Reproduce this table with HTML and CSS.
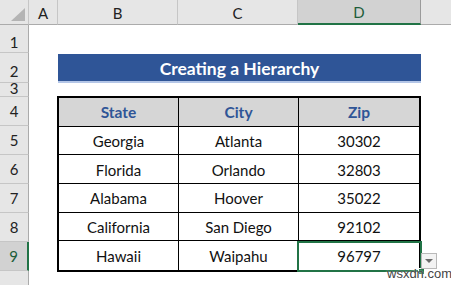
FILE: index.html
```html
<!DOCTYPE html>
<html>
<head>
<meta charset="utf-8">
<link rel="stylesheet" href="styles.css">
</head>
<body>
<div class="sheet">
  <div class="corner"><svg width="16" height="14" viewBox="0 0 16 14"><polygon points="15,0 15,13 1,13" fill="#b4b4b4"/></svg></div>
  <div class="ch">A</div>
  <div class="ch">B</div>
  <div class="ch">C</div>
  <div class="ch sel">D</div>
  <div class="ch last"></div>

  <div class="rh r1">1</div>
  <div class="rh r2">2</div>
  <div class="rh r3"><span>3</span></div>
  <div class="rh r4">4</div>
  <div class="rh r5">5</div>
  <div class="rh r6">6</div>
  <div class="rh r7">7</div>
  <div class="rh r8">8</div>
  <div class="rh r9 sel">9</div>
  <div class="rh r10"></div>

  <div class="title">Creating a Hierarchy</div>

  <div class="tbl">
    <div class="c hd">State</div><div class="c hd">City</div><div class="c hd end">Zip</div>
    <div class="c">Georgia</div><div class="c">Atlanta</div><div class="c end">30302</div>
    <div class="c">Florida</div><div class="c">Orlando</div><div class="c end">32803</div>
    <div class="c">Alabama</div><div class="c">Hoover</div><div class="c end">35022</div>
    <div class="c">California</div><div class="c">San Diego</div><div class="c end">92102</div>
    <div class="c bot">Hawaii</div><div class="c bot">Waipahu</div><div class="c bot end">96797</div>
  </div>

  <div class="selbox"></div>
  <div class="handle"></div>
  <div class="dd"><svg width="8" height="5" viewBox="0 0 8 5"><polygon points="0,0 8,0 4,4" fill="#6b6b6b"/></svg></div>
  <div class="wm">wsxdn.com</div>
</div>
</body>
</html>
```
FILE: styles.css
```css
html, body {
  margin: 0;
  padding: 0;
  background: #ffffff;
}
.sheet {
  position: relative;
  width: 451px;
  height: 285px;
  overflow: hidden;
  display: grid;
  grid-template-columns: 29px 29px 120px 120px 123px 1fr;
  grid-template-rows: 25px 28px 30px 14px 29px 29px 29px 29px 29px 29px 1fr;
  font-family: Lato, "Open Sans", sans-serif;
  color: #000;
}
.corner {
  grid-column: 1;
  grid-row: 1;
  background: #e6e6e6;
  border-right: 1px solid #c6c6c6;
  border-bottom: 1px solid #ababab;
  box-sizing: border-box;
  display: flex;
  align-items: flex-end;
  justify-content: flex-end;
  padding: 0 2px 2px 0;
}
.ch {
  grid-row: 1;
  background: #e6e6e6;
  border-right: 1px solid #c6c6c6;
  border-bottom: 1px solid #ababab;
  box-sizing: border-box;
  display: flex;
  align-items: center;
  justify-content: center;
  font-size: 15px;
  color: #222;
  padding-top: 1px;
}
.ch.sel {
  background: #d2d2d2;
  border-bottom: 2px solid #217346;
  color: #1e5d3a;
  border-right: 1px solid #9b9b9b;
}
.ch.last { border-right: none; }
.rh {
  grid-column: 1;
  background: #e6e6e6;
  border-right: 1px solid #ababab;
  border-bottom: 1px solid #c6c6c6;
  box-sizing: border-box;
  display: flex;
  align-items: center;
  justify-content: center;
  font-size: 15px;
  color: #222;
  overflow: hidden;
}
.r1 { grid-row: 2; padding-top: 6px; }
.r2 { grid-row: 3; padding-top: 6px; }
.r3 { grid-row: 4; align-items: flex-start; }
.r3 span { display: block; line-height: 12px; margin-top: -1px; }
.r4 { grid-row: 5; }
.r5 { grid-row: 6; }
.r6 { grid-row: 7; }
.r7 { grid-row: 8; }
.r8 { grid-row: 9; }
.r9 { grid-row: 10; }
.r10 { grid-row: 11; border-bottom: none; }
.rh.sel {
  background: #d2d2d2;
  border-right: 2px solid #217346;
  color: #1e5d3a;
}
.title {
  grid-column: 3 / 6;
  grid-row: 3;
  margin-top: 1px;
  background: #2f5597;
  border-bottom: 2px solid #b4c6e7;
  color: #fff;
  font-weight: bold;
  font-size: 17.5px;
  display: flex;
  align-items: center;
  justify-content: center;
  padding-top: 1px;
}
.tbl {
  grid-column: 3 / 6;
  grid-row: 5 / 11;
  margin: -1px 0 -1px -1px;
  border: 2px solid #000;
  display: grid;
  grid-template-columns: 120px 120px 1fr;
  grid-template-rows: repeat(6, 1fr);
}
.c {
  border-right: 1px solid #000;
  border-bottom: 1px solid #000;
  display: flex;
  align-items: center;
  justify-content: center;
  font-size: 15px;
  color: #111;
  padding-top: 1px;
}
.c.end { border-right: none; }
.c.bot { border-bottom: none; }
.c.hd {
  background: #d6d6d6;
  color: #2f5597;
  font-weight: bold;
  font-size: 15.5px;
}
.selbox {
  position: absolute;
  left: 297px;
  top: 241px;
  width: 125px;
  height: 31px;
  box-sizing: border-box;
  border: 2px solid #217346;
}
.handle {
  position: absolute;
  left: 418px;
  top: 268px;
  width: 5px;
  height: 5px;
  background: #217346;
  border: 1px solid #fff;
}
.dd {
  position: absolute;
  left: 421px;
  top: 253px;
  width: 16px;
  height: 16px;
  box-sizing: border-box;
  background: #f3f3f3;
  border: 1px solid #b9b9b9;
  display: flex;
  align-items: center;
  justify-content: center;
}
.wm {
  position: absolute;
  left: 387px;
  top: 266px;
  font-family: "Liberation Sans", Arial, sans-serif;
  font-size: 13px;
  color: #444;
  text-shadow: 0 0 2px #fff;
}
```
